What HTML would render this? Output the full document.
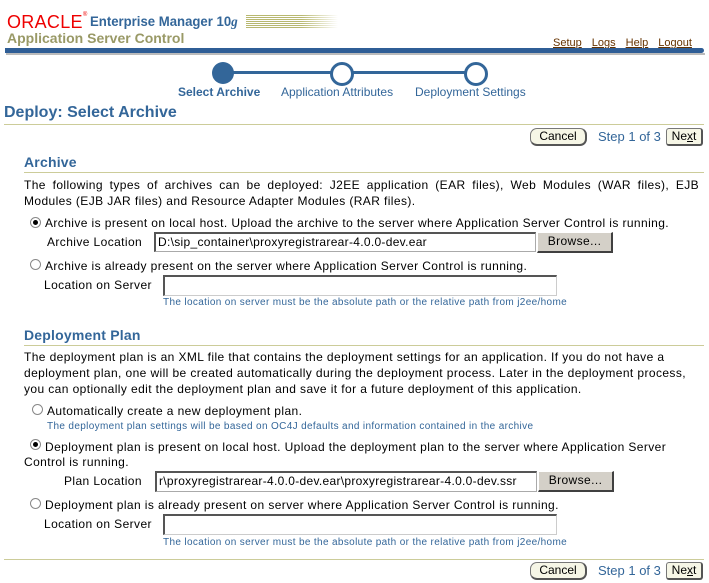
<!DOCTYPE html>
<html><head><style>
body{margin:0;width:709px;height:583px;background:#fff;font-family:"Liberation Sans",sans-serif;font-size:12px;color:#000;position:relative;overflow:hidden;letter-spacing:0.4px}
.a{position:absolute;white-space:nowrap}
.blue{color:#336699}
.h{font-weight:bold;font-size:14px;color:#336699;letter-spacing:0.2px}
.line{position:absolute;height:1px;background:#cccc99}
.inp{position:absolute;border:1px solid #aaa;border-top:2px solid #555;border-left:2px solid #555;background:#fff;box-sizing:border-box;font-size:12px;line-height:16px;padding-left:2px;overflow:hidden;white-space:nowrap;letter-spacing:0.3px}
.br{position:absolute;background:#d4d0c8;border:1px solid #fff;border-right:2px solid #404040;border-bottom:2px solid #404040;box-sizing:border-box;text-align:center;font-size:12px;line-height:16px}
.btn{position:absolute;background:#f6f6e6;border:1px solid #777;border-right:2px solid #555;border-bottom:2px solid #555;border-radius:7px;box-sizing:border-box;text-align:center;font-size:12px;line-height:15px;letter-spacing:0}
.rad{position:absolute;width:9px;height:9px;border:1px solid #888;border-radius:50%;background:#fff}
.rad.on::after{content:"";position:absolute;left:2px;top:2px;width:5px;height:5px;border-radius:50%;background:#000}
.sm{font-size:10px;color:#336699;letter-spacing:0.35px}
.lk{color:#663300;text-decoration:underline;font-size:11px}
.n{letter-spacing:0}
</style></head><body>
<div class="a n" style="left:7px;top:12px;font-size:18px;color:#e00;letter-spacing:0.3px">ORACLE<span style="font-size:6px;vertical-align:top">®</span></div>
<div class="a n" style="left:90px;top:13px;font-size:14px;font-weight:bold;color:#336699;transform:scaleX(0.94);transform-origin:left">Enterprise Manager 10<i style="font-family:'Liberation Serif',serif">g</i></div>
<div class="a" style="left:246px;top:15px;width:92px;height:14px;background:repeating-linear-gradient(#b8b870 0 1px,#fff 1px 2px);-webkit-mask:linear-gradient(90deg,#000 60%,transparent);mask:linear-gradient(90deg,#000 60%,transparent)"></div>
<div class="a n" style="left:7px;top:30px;font-size:14px;font-weight:bold;color:#999966">Application Server Control</div>
<div class="a n" style="left:553px;top:35px"><span class="lk">Setup</span>&nbsp;&nbsp;&nbsp;<span class="lk">Logs</span>&nbsp;&nbsp;&nbsp;<span class="lk">Help</span>&nbsp;&nbsp;&nbsp;<span class="lk">Logout</span></div>
<div class="a" style="left:5px;top:48px;width:699px;height:5px;background:#2f5e96;border-radius:0 3px 3px 0"></div>
<div class="a" style="left:6px;top:53px;width:699px;height:2px;background:#bbb"></div>
<div class="a" style="left:224px;top:71px;width:252px;height:3px;background:#336699"></div>
<div class="a" style="left:212px;top:62px;width:22px;height:22px;border-radius:50%;background:#336699"></div>
<div class="a" style="left:330px;top:62px;width:18px;height:18px;border:3px solid #336699;border-radius:50%;background:#fff"></div>
<div class="a" style="left:464px;top:62px;width:18px;height:18px;border:3px solid #336699;border-radius:50%;background:#fff"></div>
<div class="a blue n" style="left:178px;top:85px;font-weight:bold">Select Archive</div>
<div class="a blue n" style="left:281px;top:85px">Application Attributes</div>
<div class="a blue n" style="left:415px;top:85px">Deployment Settings</div>
<div class="a n" style="left:4px;top:104px;font-size:16px;font-weight:bold;color:#336699">Deploy: Select Archive</div>
<div class="line" style="left:4px;top:124px;width:700px"></div>
<div class="btn" style="left:530px;top:128px;width:57px;height:18px">Cancel</div>
<div class="a blue n" style="left:598px;top:129px;font-size:13px">Step 1 of 3</div>
<div class="btn" style="left:666px;top:128px;width:37px;height:18px;border-radius:3px">Ne<u>x</u>t</div>

<div class="a h" style="left:24px;top:154px">Archive</div>
<div class="line" style="left:24px;top:172px;width:680px"></div>
<div class="a" style="left:24px;top:177px;line-height:16px;word-spacing:3px">The following types of archives can be deployed: J2EE application (EAR files), Web Modules (WAR files), EJB</div>
<div class="a" style="left:24px;top:193px;line-height:16px">Modules (EJB JAR files) and Resource Adapter Modules (RAR files).</div>
<div class="rad on" style="left:30px;top:217px"></div>
<div class="a" style="left:45px;top:216px">Archive is present on local host. Upload the archive to the server where Application Server Control is running.</div>
<div class="a" style="left:47px;top:235px">Archive Location</div>
<div class="inp" style="left:154px;top:232px;width:382px;height:20px">D:\sip_container\proxyregistrarear-4.0.0-dev.ear</div>
<div class="br" style="left:537px;top:232px;width:76px;height:21px">Browse...</div>
<div class="rad" style="left:30px;top:259px"></div>
<div class="a" style="left:45px;top:259px">Archive is already present on the server where Application Server Control is running.</div>
<div class="a" style="left:44px;top:278px">Location on Server</div>
<div class="inp" style="left:163px;top:275px;width:394px;height:21px;border-color:#555 #ccc #ccc #555"></div>
<div class="a sm" style="left:163px;top:297px">The location on server must be the absolute path or the relative path from j2ee/home</div>

<div class="a h" style="left:24px;top:327px">Deployment Plan</div>
<div class="line" style="left:24px;top:345px;width:680px"></div>
<div class="a" style="left:24px;top:349px;line-height:16px">The deployment plan is an XML file that contains the deployment settings for an application. If you do not have a<br>deployment plan, one will be created automatically during the deployment process. Later in the deployment process,<br>you can optionally edit the deployment plan and save it for a future deployment of this application.</div>
<div class="rad" style="left:32px;top:404px"></div>
<div class="a" style="left:47px;top:404px">Automatically create a new deployment plan.</div>
<div class="a sm" style="left:47px;top:421px">The deployment plan settings will be based on OC4J defaults and information contained in the archive</div>
<div class="rad on" style="left:30px;top:439px"></div>
<div class="a" style="left:45px;top:439px;line-height:16px">Deployment plan is present on local host. Upload the deployment plan to the server where Application Server</div>
<div class="a" style="left:24px;top:455px">Control is running.</div>
<div class="a" style="left:64px;top:474px">Plan Location</div>
<div class="inp" style="left:155px;top:471px;width:382px;height:21px">r\proxyregistrarear-4.0.0-dev.ear\proxyregistrarear-4.0.0-dev.ssr</div>
<div class="br" style="left:538px;top:471px;width:76px;height:21px">Browse...</div>
<div class="rad" style="left:30px;top:498px"></div>
<div class="a" style="left:45px;top:498px">Deployment plan is already present on server where Application Server Control is running.</div>
<div class="a" style="left:44px;top:517px">Location on Server</div>
<div class="inp" style="left:163px;top:514px;width:394px;height:21px;border-color:#555 #ccc #ccc #555"></div>
<div class="a sm" style="left:163px;top:537px">The location on server must be the absolute path or the relative path from j2ee/home</div>

<div class="line" style="left:4px;top:559px;width:700px"></div>
<div class="btn" style="left:530px;top:562px;width:57px;height:18px">Cancel</div>
<div class="a blue n" style="left:598px;top:563px;font-size:13px">Step 1 of 3</div>
<div class="btn" style="left:666px;top:562px;width:37px;height:18px;border-radius:3px">Ne<u>x</u>t</div>
</body></html>
